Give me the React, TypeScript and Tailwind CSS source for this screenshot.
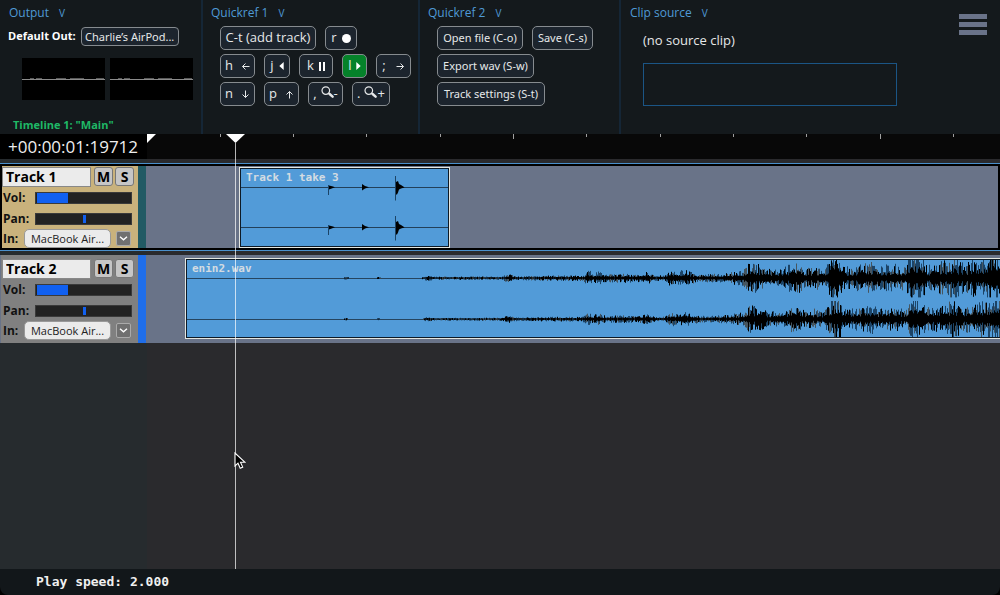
import React from 'react';

const SANS = "font-['Open_Sans','Noto_Sans',sans-serif]";
const SMALL = "font-['Noto_Sans','Open_Sans',sans-serif]";
const MONO = "font-['DejaVu_Sans_Mono','Liberation_Mono',monospace]";

/* ---------- icons ---------- */

function Arrow({ dir }: { dir: 'left' | 'right' | 'up' | 'down' }) {
  const paths = {
    left: 'M8.5 4.5H1.5M4.5 1.5l-3 3 3 3',
    right: 'M.5 4.5h7M4.5 1.5l3 3-3 3',
    up: 'M4.5 8.5v-7M1.5 4.5l3-3 3 3',
    down: 'M4.5 .5v7M1.5 4.5l3 3 3-3',
  };
  return (
    <svg width="9" height="9" viewBox="0 0 9 9" fill="none" stroke="currentColor" strokeWidth="1">
      <path d={paths[dir]} />
    </svg>
  );
}

function Magnifier() {
  return (
    <svg width="13" height="12" viewBox="0 0 13 12" fill="none" stroke="currentColor" className="mb-1">
      <circle cx="4.8" cy="4.6" r="3.8" strokeWidth="1.2" />
      <path d="M7.6 7.2l1 .8" strokeWidth="1.4" />
      <path d="M8.6 8l3 2.7" strokeWidth="2.4" strokeLinecap="round" />
    </svg>
  );
}

function Triangle({ dir }: { dir: 'left' | 'right' }) {
  return (
    <svg width="5" height="8" viewBox="0 0 5 8" fill="#fff">
      <path d={dir === 'left' ? 'M4.7 0v8L.3 4z' : 'M.3 0v8l4.400-4z'} />
    </svg>
  );
}

/* ---------- top panel ---------- */

function Section({ title, className, children }: { title: string; className: string; children: React.ReactNode }) {
  return (
    <section className={`shrink-0 pt-1 ${className}`}>
      <button className="flex h-[18px] items-center gap-2.5 text-[12px] text-[#4f9ad6]">
        {title}
        <span className="text-[10px]">V</span>
      </button>
      {children}
    </section>
  );
}

function Key({ className, children }: { className: string; children: React.ReactNode }) {
  return (
    <button
      className={`flex h-6 shrink-0 items-center justify-center whitespace-nowrap rounded-[5px] border border-[#868b8f] text-[#e6e8e9] ${className}`}
    >
      {children}
    </button>
  );
}

function Meter() {
  return (
    <svg width="83" height="42" viewBox="0 0 83 42" className="bg-black" fill="none">
      <path d="M0 21.5h83" stroke="#8c8c8c" />
      <path d="M8 20.5h4m2 0h6m14 0h10m4 0h14m12 0h8" stroke="#5a5a5a" />
    </svg>
  );
}

function TopPanel() {
  return (
    <header className="flex h-[134px] shrink-0 bg-[#14191c]">
      <Section title="Output" className="flex w-[203px] flex-col border-r-2 border-[#152636] pl-[9px]">
        <div className="mt-[5px] flex h-[19px] items-center gap-[5px]">
          <span className="-ml-px whitespace-nowrap text-[11px] font-bold text-white">Default Out:</span>
          <button
            className={`h-[19px] w-[98px] whitespace-nowrap rounded-[4px] border border-[#868b8f] bg-[#1c242d] text-[11px] leading-[16px] text-[#e6e8e9] ${SMALL}`}
          >
            Charlie’s AirPod...
          </button>
        </div>
        <div className="mt-3 flex gap-[5px] pl-[13px]">
          <Meter />
          <Meter />
        </div>
        <h1 className="mt-4 pl-1 text-[11px] font-bold leading-[18px] text-[#1fb866]">Timeline 1: "Main"</h1>
      </Section>

      <Section title="Quickref 1" className="w-[217px] border-r-2 border-[#152636] pl-2">
        <div className="mt-1 flex flex-col gap-1 pl-[9px] text-[13px]">
          <div className="flex gap-[9px]">
            <Key className="w-24 bg-[#1c242d]">C-t (add track)</Key>
            <Key className="w-8 gap-[5px] bg-[#1c242d]">
              r <span className="size-[9px] rounded-full bg-white" />
            </Key>
          </div>
          <div className="flex gap-[9px]">
            <Key className="w-[35px] gap-2 bg-[#1c242d]">h <Arrow dir="left" /></Key>
            <Key className="w-[26px] gap-[5px] bg-[#1c242d]">j <Triangle dir="left" /></Key>
            <Key className="w-[34px] gap-[5px] bg-[#1c242d]">
              k
              <span className="flex gap-[2px]">
                <i className="h-[9px] w-[2px] bg-white" />
                <i className="h-[9px] w-[2px] bg-white" />
              </span>
            </Key>
            <Key className="w-[25px] gap-1 bg-[#05822a]">l <Triangle dir="right" /></Key>
            <Key className="w-[35px] gap-2.5 bg-[#1c242d]">; <Arrow dir="right" /></Key>
          </div>
          <div className="flex gap-[9px]">
            <Key className="w-[35px] gap-2 bg-[#1c242d]">n <Arrow dir="down" /></Key>
            <Key className="w-[35px] gap-2 bg-[#1c242d]">p <Arrow dir="up" /></Key>
            <Key className="w-[35px] gap-1 bg-[#1c242d]">
              , <span className="flex items-center"><Magnifier />-</span>
            </Key>
            <Key className="w-[38px] gap-1 bg-[#1c242d]">
              . <span className="flex items-center"><Magnifier />+</span>
            </Key>
          </div>
        </div>
      </Section>

      <Section title="Quickref 2" className="w-[201px] border-r-2 border-[#152636] pl-2">
        <div className={`mt-1 flex flex-col gap-1 pl-[9px] text-[11px] ${SMALL}`}>
          <div className="flex gap-[9px]">
            <Key className="w-[86px] bg-[#1c242d]">Open file (C-o)</Key>
            <Key className="w-[61px] bg-[#1c242d]">Save (C-s)</Key>
          </div>
          <Key className="w-[97px] bg-[#1c242d]">Export wav (S-w)</Key>
          <Key className="w-[108px] bg-[#1c242d]">Track settings (S-t)</Key>
        </div>
      </Section>

      <Section title="Clip source" className="w-[300px] pl-[9px]">
        <div className="pl-[13px]">
          <p className="mt-2 text-[13px] leading-5 text-[#e6e8e9]">(no source clip)</p>
          <div className="mt-[13px] h-[43px] w-[254px] border border-[#1b5585]" />
        </div>
      </Section>

      <button aria-label="Menu" className="mr-[13px] ml-auto flex w-7 flex-col gap-[3px] self-start pt-3.5">
        <span className="h-[5px] w-full bg-[#6a7389]" />
        <span className="h-[5px] w-full bg-[#6a7389]" />
        <span className="h-[5px] w-full bg-[#6a7389]" />
      </button>
    </header>
  );
}

/* ---------- ruler ---------- */

function Ruler() {
  const ticks = Array.from({ length: 30 }, (_, i) => i + 1);
  return (
    <div className="flex h-[25px] shrink-0 bg-[#080808]">
      <output className="w-[147px] shrink-0 bg-black pl-2 text-[17px] leading-[26px] text-[#eeeeee]">
        +00:00:01:19712
      </output>
      <div className="relative flex-1 overflow-hidden">
        {ticks.map((n) => (
          <i
            key={n}
            className={`absolute top-0 w-px bg-[#a0a0a0] ${n % 5 ? 'h-[3px]' : 'h-[5px]'}`}
            style={{ left: Math.floor(n * 73.3) }}
          />
        ))}
        <svg width="9" height="9" viewBox="0 0 9 9" className="absolute top-0 left-0">
          <path d="M0 0h9L0 9z" fill="#fff" />
        </svg>
      </div>
    </div>
  );
}

/* ---------- waveforms ---------- */

type Point = [number, number];

function rng(seed: number) {
  let s = seed;
  return () => {
    s = (s * 1664525 + 1013904223) % 4294967296;
    return s / 4294967296;
  };
}

function envelope(points: Point[], x: number) {
  for (let i = 1; i < points.length; i++) {
    const [x0, y0] = points[i - 1];
    const [x1, y1] = points[i];
    if (x <= x1) return y0 + ((y1 - y0) * (x - x0)) / (x1 - x0);
  }
  return points[points.length - 1][1];
}

function Noise({ points, mid, limit, seed }: { points: Point[]; mid: number; limit: number; seed: number }) {
  const rand = rng(seed);
  let peak = '';
  let body = '';
  let shade = '';
  for (let x = 0; x < 815; x++) {
    const e = envelope(points, x);
    if (e < 0.7) continue;
    const up = Math.min(limit, e * (0.3 + 0.85 * rand()));
    const down = Math.min(limit, e * (0.3 + 0.85 * rand()));
    const seg = `M${x + 0.5} ${(mid - up).toFixed(1)}V${(mid + down + 0.4).toFixed(1)}`;
    const kind = rand();
    if (kind < 0.3) body += seg;
    else if (kind < 0.75) peak += seg;
    else shade += seg;
    const core = 0.2 + 0.3 * rand();
    body += `M${x + 0.5} ${(mid - e * core).toFixed(1)}V${(mid + e * core).toFixed(1)}`;
  }
  return (
    <g fill="none" strokeWidth="1">
      <path d={`M0 ${mid + 0.5}H815`} stroke="#254560" />
      <path d={peak} stroke="#1c4467" />
      <path d={shade} stroke="#46555f" />
      <path d={body} stroke="#000" />
    </g>
  );
}

const ENVELOPE: Point[] = [
  [0, 0.2], [155, 0.4], [158, 1.2], [164, 0.4], [188, 0.5], [191, 1], [196, 0.4], [234, 0.4], [240, 2.4],
  [248, 1.2], [280, 1.3], [314, 1.4], [321, 4], [327, 2], [333, 1.6], [360, 2.2], [395, 2.4], [402, 7],
  [406, 4], [411, 6], [418, 3.5], [440, 4], [448, 3], [460, 5.5], [468, 2.2], [478, 2.5], [484, 8], [490, 5],
  [498, 9], [502, 6], [513, 3.5], [535, 4], [556, 7], [564, 16], [572, 12], [580, 8], [594, 8], [604, 14],
  [612, 15], [617, 8], [627, 11], [636, 8], [641, 14], [645, 24], [653, 22], [656, 10], [672, 12], [684, 16],
  [692, 11], [708, 13], [719, 10], [724, 26], [732, 23], [739, 12], [756, 15], [766, 20], [776, 14],
  [790, 18], [800, 20], [808, 26], [815, 20],
];

function FileWave() {
  const lower = ENVELOPE.map(([x, y]) => [x, y * 0.85] as Point);
  return (
    <svg width="815" height="78" viewBox="0 0 815 78" className="absolute top-0 left-0">
      <Noise points={ENVELOPE} mid={18} limit={19} seed={7} />
      <Noise points={lower} mid={59} limit={18} seed={91} />
    </svg>
  );
}

function TakeWave() {
  return (
    <svg width="208" height="78" viewBox="0 0 208 78" className="absolute top-0 left-0">
      {[18, 58].map((y) => (
        <g key={y} transform={`translate(0 ${y})`}>
          <path d="M0 .5H208" stroke="#22405a" />
          <path d="M87.5-2V8" stroke="#1c4467" />
          <path d="M88-1.500l4 1 2 .8-2 .7-4 1.500z" fill="#000" />
          <path d="M121-3l3 2 4 1.300-4 1.200-3 2z" fill="#000" />
          <path d="M154.5-11V13.500" stroke="#1c4467" />
          <path d="M155-5l2-1 1 3 2 1 3 2 .5.5-3.500 1-2 1-1 3-1 2h-1z" fill="#000" />
        </g>
      ))}
    </svg>
  );
}

/* ---------- tracks ---------- */

function Slider({ id, kind }: { id: string; kind: 'volume' | 'pan' }) {
  const shared =
    'h-3 w-[97px] appearance-none border border-[#3a3a3a] [&::-webkit-slider-thumb]:appearance-none [&::-webkit-slider-thumb]:h-2';
  return kind === 'volume' ? (
    <input
      id={id}
      type="range"
      defaultValue={33}
      className={`${shared} bg-[linear-gradient(90deg,#222_1px,#1160f0_1px,#1160f0_34%,#222_34%)] [&::-webkit-slider-thumb]:w-0`}
    />
  ) : (
    <input
      id={id}
      type="range"
      defaultValue={51}
      className={`${shared} bg-[#222] [&::-webkit-slider-thumb]:w-[3px] [&::-webkit-slider-thumb]:bg-[#1160f0]`}
    />
  );
}

function ToggleButton({ children }: { children: string }) {
  return (
    <button className="flex h-[19px] w-[19px] items-center justify-center rounded-[3px] border border-[#777] bg-[#c6c6c6] text-[14px] font-bold text-black">
      {children}
    </button>
  );
}

interface TrackProps {
  id: string;
  name: string;
  selected?: boolean;
  children: React.ReactNode;
}

function Track({ id, name, selected, children }: TrackProps) {
  const row = 'flex items-center text-[12px] font-bold text-[#111]';
  return (
    <section
      className={`relative flex h-[88px] overflow-hidden ${
        selected ? 'border-y border-[#4a90cc] bg-black px-[2px] py-[2px]' : 'bg-[#697388] pl-px'
      }`}
    >
      <div
        className={`flex shrink-0 flex-col ${
          selected ? 'w-[136px] bg-[#c9b27c]' : 'w-[137px] bg-[#808080] pt-[3px] pl-px'
        }`}
      >
        <div className="flex h-[21px] items-center gap-[2px]">
          <input
            aria-label="Track name"
            defaultValue={name}
            className="mr-px h-5 w-[89px] border border-[#888] bg-[#ebebeb] pl-[3px] text-[14px] font-bold text-black"
          />
          <ToggleButton>M</ToggleButton>
          <ToggleButton>S</ToggleButton>
        </div>
        <div className={`${row} h-[21px]`}>
          <label htmlFor={`${id}-vol`} className="w-[33px] pl-px">Vol:</label>
          <Slider id={`${id}-vol`} kind="volume" />
        </div>
        <div className={`${row} h-[21px]`}>
          <label htmlFor={`${id}-pan`} className="w-[33px] pl-px">Pan:</label>
          <Slider id={`${id}-pan`} kind="pan" />
        </div>
        <div className={`${row} h-[19px]`}>
          <label htmlFor={`${id}-in`} className="w-[22px] pl-px">In:</label>
          <button
            id={`${id}-in`}
            className="h-[19px] w-[87px] whitespace-nowrap rounded-[5px] border border-[#999] bg-[#ebebeb] text-[11px] leading-[17px] font-normal text-[#222]"
          >
            MacBook Air...
          </button>
          <button
            aria-label="More track settings"
            className="ml-[5px] flex size-[15px] items-center justify-center rounded-[2px] border border-[#aaa] bg-[#707070]"
          >
            <svg width="9" height="5" viewBox="0 0 9 5" fill="none" stroke="#fff" strokeWidth="1.4">
              <path d="M1 .8l3.500 3 3.500-3" />
            </svg>
          </button>
        </div>
      </div>
      <div className={`w-2 shrink-0 ${selected ? 'bg-[#215a64]' : 'bg-[#1f6eea]'}`} />
      <div className="flex-1 bg-[#697388]" />
      {children}
    </section>
  );
}

function Clip({ name, className, children }: { name: string; className: string; children: React.ReactNode }) {
  return (
    <div className={`absolute h-[81px] border border-[#e4e6e0] ${className}`}>
      <div className="relative h-full overflow-hidden border border-[#0d1a26] bg-[#529bd8]">
        {children}
        <span className={`relative block pt-px pl-[5px] text-[11px] leading-4 font-bold whitespace-pre text-[#d3dbe2] ${MONO}`}>
          {name}
        </span>
      </div>
    </div>
  );
}

/* ---------- page ---------- */

export default function App() {
  return (
    <div className={`flex h-screen flex-col overflow-hidden bg-black ${SANS}`}>
      <TopPanel />
      <div className="relative flex min-h-0 flex-1 flex-col">
        <Ruler />
        <main className="relative flex-1 bg-[linear-gradient(90deg,#262b2e_147px,#2a2a2d_147px)]">
          <div className="flex flex-col gap-1 pt-1">
            <Track id="track1" name="Track 1" selected>
              <Clip name="Track 1 take 3" className="top-[3px] left-[239px] w-[211px]">
                <TakeWave />
              </Clip>
            </Track>
            <Track id="track2" name="Track 2">
              <Clip name="enin2.wav" className="top-[3px] -right-1 left-[185px]">
                <FileWave />
              </Clip>
            </Track>
          </div>
        </main>
        <div className="pointer-events-none absolute top-0 bottom-0 left-[226px] flex w-[19px] flex-col items-center">
          <svg width="19" height="9" viewBox="0 0 19 9" className="shrink-0">
            <path d="M0 0h19L9.500 9z" fill="#fff" />
          </svg>
          <i className="w-px flex-1 bg-white/70" />
        </div>
        <svg width="12" height="18" viewBox="0 0 12 18" className="pointer-events-none absolute top-[318px] left-[234px]">
          <path d="M1 1v13l3-2.800 2.200 5 2.500-1.100-2.200-4.800H11z" fill="#000" stroke="#fff" strokeWidth="1.100" />
        </svg>
      </div>
      <footer className={`h-[26px] shrink-0 rounded-b-[8px] bg-[#12171a] pl-9 text-[13px] leading-[25px] font-bold text-[#f0f0f0] ${MONO}`}>
        Play speed: 2.000
      </footer>
    </div>
  );
}
